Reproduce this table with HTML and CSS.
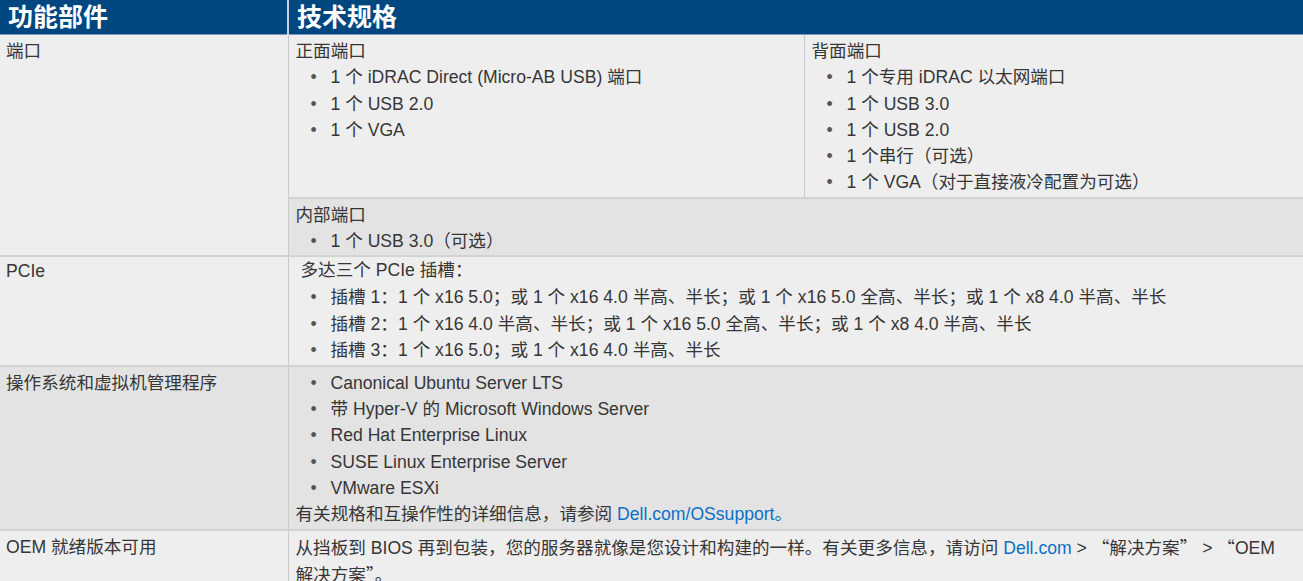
FILE: index.html
```html
<!DOCTYPE html>
<html lang="zh-CN">
<head>
  <meta charset="UTF-8">
  <title>功能部件与技术规格</title>
  <link rel="stylesheet" href="styles.css">
</head>
<body>
  <table class="spec-table">
    <colgroup>
      <col class="col-feature">
      <col class="col-front">
      <col class="col-rear">
    </colgroup>
    <thead>
      <tr>
        <th>功能部件</th>
        <th colspan="2" class="th-spec">技术规格</th>
      </tr>
    </thead>
    <tbody>
      <tr>
        <td rowspan="2" class="feature">端口</td>
        <td class="spec">
          正面端口
          <ul>
            <li>1 个 iDRAC Direct (Micro-AB USB) 端口</li>
            <li>1 个 USB 2.0</li>
            <li>1 个 VGA</li>
          </ul>
        </td>
        <td class="spec">
          背面端口
          <ul>
            <li>1 个专用 iDRAC 以太网端口</li>
            <li>1 个 USB 3.0</li>
            <li>1 个 USB 2.0</li>
            <li>1 个串行（可选）</li>
            <li>1 个 VGA（对于直接液冷配置为可选）</li>
          </ul>
        </td>
      </tr>
      <tr class="shade">
        <td colspan="2" class="spec">
          内部端口
          <ul>
            <li>1 个 USB 3.0（可选）</li>
          </ul>
        </td>
      </tr>
      <tr class="tight">
        <td class="feature">PCIe</td>
        <td colspan="2" class="spec">
          <div class="lead">多达三个 PCIe 插槽：</div>
          <ul>
            <li>插槽 1：1 个 x16 5.0；或 1 个 x16 4.0 半高、半长；或 1 个 x16 5.0 全高、半长；或 1 个 x8 4.0 半高、半长</li>
            <li>插槽 2：1 个 x16 4.0 半高、半长；或 1 个 x16 5.0 全高、半长；或 1 个 x8 4.0 半高、半长</li>
            <li>插槽 3：1 个 x16 5.0；或 1 个 x16 4.0 半高、半长</li>
          </ul>
        </td>
      </tr>
      <tr class="shade">
        <td class="feature">操作系统和虚拟机管理程序</td>
        <td colspan="2" class="spec">
          <ul>
            <li>Canonical Ubuntu Server LTS</li>
            <li>带 Hyper-V 的 Microsoft Windows Server</li>
            <li>Red Hat Enterprise Linux</li>
            <li>SUSE Linux Enterprise Server</li>
            <li>VMware ESXi</li>
          </ul>
          有关规格和互操作性的详细信息，请参阅 <a href="#">Dell.com/OSsupport。</a>
        </td>
      </tr>
      <tr>
        <td class="feature">OEM 就绪版本可用</td>
        <td colspan="2" class="spec">从挡板到 BIOS 再到包装，您的服务器就像是您设计和构建的一样。有关更多信息，请访问 <a href="#">Dell.com</a> &gt; <span class="cjk">“解决方案”</span> &gt; <span class="cjk">“</span>OEM <span class="nowrap">解决方案<span class="cjk">”。</span></span></td>
      </tr>
    </tbody>
  </table>
</body>
</html>
```

FILE: styles.css
```css
body {
  margin: 0;
  padding: 0;
  background: #eeeeee;
  font-family: 'Liberation Sans', 'Noto Sans CJK SC', sans-serif;
  color: #363636;
}
.spec-table {
  width: 1303px;
  border-collapse: collapse;
  table-layout: fixed;
  font-size: 17.6px;
  line-height: 26.3px;
}
.col-feature {
  width: 288px;
}
.col-front {
  width: 516px;
}
.spec-table th {
  height: 34px;
  padding: 0 8px;
  background: #00467f;
  color: white;
  font-size: 25px;
  font-weight: bold;
  text-align: left;
  border-bottom: 1px solid #7f9bbb;
  line-height: 34px;
}
.spec-table .th-spec {
  border-left: 2px solid #c9d4e0;
  padding-left: 8px;
}
.spec-table td {
  vertical-align: top;
  background: #eeeeee;
  border-bottom: 2px solid #d2d2d2;
  padding: 3px 7px 1px;
}
.spec-table td.feature {
  padding-left: 6px;
}
.spec-table td.spec {
  border-left: 1px solid #c9c9c9;
}
.tight td {
  padding-top: 0;
  line-height: 26.6px;
}
.tight td.feature {
  padding-top: 1px;
}
.shade td {
  background: #e3e3e3;
}
ul {
  list-style: none;
  margin: 0;
  padding: 0 0 0 35px;
}
li::before {
  content: "•";
  display: inline-block;
  width: 20px;
  margin-left: -20px;
  color: #555;
}
.lead {
  padding-left: 5px;
}
.cjk {
  font-family: 'Noto Sans CJK SC', sans-serif;
}
.nowrap {
  white-space: nowrap;
}
a {
  color: #0b6fc6;
  text-decoration: none;
}
```
